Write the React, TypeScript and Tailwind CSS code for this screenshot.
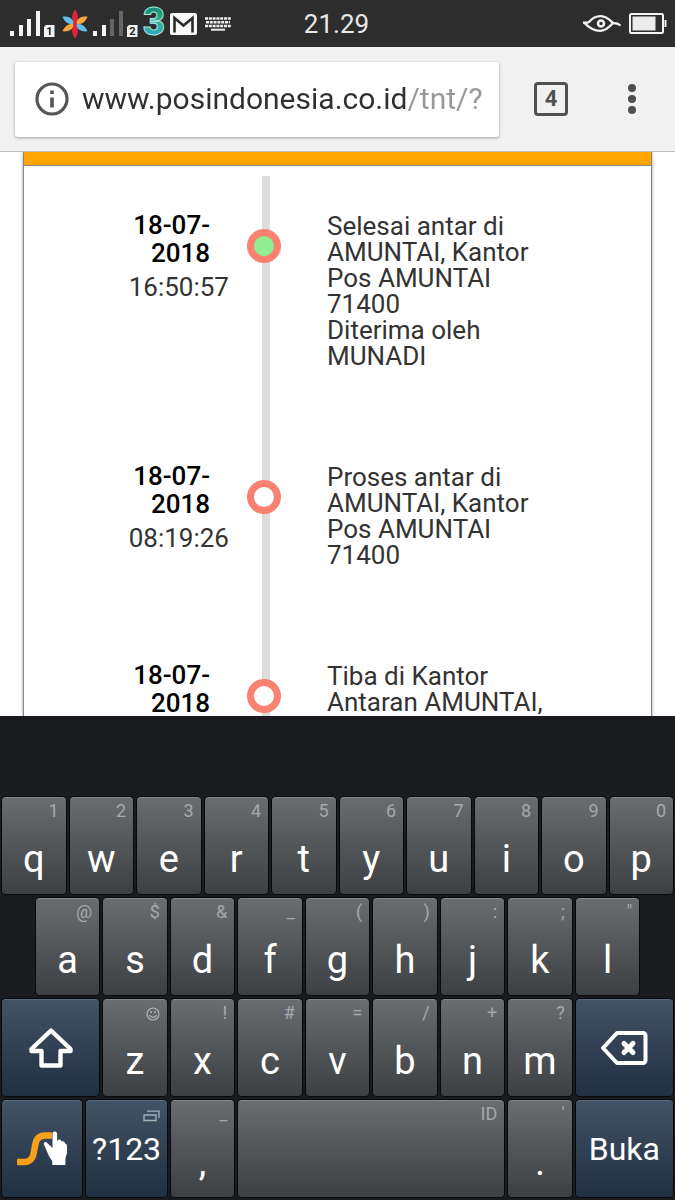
import { useState, type ReactNode } from "react";
import { clsx } from "clsx";

interface TrackingEvent {
  date: string;
  time?: string;
  lines: string[];
  delivered?: boolean;
}

const EVENTS: TrackingEvent[] = [
  {
    date: "18-07-2018",
    time: "16:50:57",
    lines: ["Selesai antar di AMUNTAI, Kantor Pos AMUNTAI 71400", "Diterima oleh MUNADI"],
    delivered: true,
  },
  {
    date: "18-07-2018",
    time: "08:19:26",
    lines: ["Proses antar di AMUNTAI, Kantor Pos AMUNTAI 71400"],
  },
  { date: "18-07-2018", lines: ["Tiba di Kantor Antaran AMUNTAI,"] },
];

// [letter, long-press symbol]
const ROW_1 = [["q", "1"], ["w", "2"], ["e", "3"], ["r", "4"], ["t", "5"], ["y", "6"], ["u", "7"], ["i", "8"], ["o", "9"], ["p", "0"]];
const ROW_2 = [["a", "@"], ["s", "$"], ["d", "&"], ["f", "_"], ["g", "("], ["h", ")"], ["j", ":"], ["k", ";"], ["l", '"']];
const ROW_3 = [["z", ""], ["x", "!"], ["c", "#"], ["v", "="], ["b", "/"], ["n", "+"], ["m", "?"]];

function SignalIcon({ sim, strength }: { sim: string; strength: number }) {
  const bars = [
    { x: 0, h: 5 },
    { x: 9, h: 11 },
    { x: 17, h: 17 },
    { x: 26, h: 25 },
  ];
  return (
    <svg width="45" height="30" viewBox="0 -2 45 30" role="img" aria-label={`SIM ${sim}`}>
      {bars.map((b, i) => (
        <rect key={b.x} x={b.x} y={25 - b.h} width="4" height={b.h} fill={i < strength ? "#f4f4f4" : "#666"} />
      ))}
      <path d="M36 14h8.500v12H34v-10z" fill="#f4f4f4" />
      <text x="39.300" y="24" fontSize="11" fontWeight="700" textAnchor="middle" fill="#222">
        {sim}
      </text>
    </svg>
  );
}

function FlowerIcon() {
  const petal = "M0 0C-4-4-3.600-10 0-14.500C3.600-10 4-4 0 0z";
  return (
    <svg width="28" height="30" viewBox="-14 -15 28 30" aria-hidden="true">
      <path d={petal} fill="#62bdea" transform="rotate(-60)" />
      <path d={petal} fill="#f6a93b" transform="rotate(60)" />
      <path d={petal} fill="#62bdea" transform="rotate(120)" />
      <path d={petal} fill="#f6a93b" transform="rotate(-120)" />
      <path d={petal} fill="#e0243c" />
      <path d={petal} fill="#e0243c" transform="rotate(180)" />
      <circle r="2" fill="#e0243c" />
    </svg>
  );
}

function ThreeIcon() {
  return (
    <svg width="24" height="44" viewBox="0 -6 24 44" aria-hidden="true">
      <defs>
        <linearGradient id="three" x1="0" y1="0" x2="0" y2="1">
          <stop offset="0.2" stopColor="#178f7c" />
          <stop offset="0.5" stopColor="#35b08f" />
          <stop offset="0.9" stopColor="#2f9fdc" />
        </linearGradient>
      </defs>
      <text
        x="12"
        y="27"
        fontSize="38"
        fontWeight="900"
        textAnchor="middle"
        fill="url(#three)"
        stroke="#a5e3dc"
        strokeWidth="1"
      >
        3
      </text>
    </svg>
  );
}

function MailIcon() {
  return (
    <svg width="27" height="22" viewBox="0 0 27 22" aria-hidden="true">
      <rect width="27" height="22" rx="2" fill="#f7f7f7" />
      <path d="M4.500 19.500V5l9 7.500 9-7.500v14.500" fill="none" stroke="#2b2b2b" strokeWidth="2.600" />
    </svg>
  );
}

function KeyboardStatusIcon() {
  return (
    <svg width="26" height="14" viewBox="0 0 26 14" aria-hidden="true">
      <g stroke="#eee" strokeWidth="2.600">
        <path d="M0 1.500h26" strokeDasharray="3 0.800" />
        <path d="M1 5.300h24" strokeDasharray="3 0.800" />
        <path d="M0 9h26" strokeDasharray="3 0.800" />
        <path d="M6 12.700h14" strokeWidth="2" />
      </g>
    </svg>
  );
}

function EyeIcon() {
  return (
    <svg width="38" height="18" viewBox="0 0 38 18" fill="none" stroke="#f4f4f4" aria-hidden="true">
      <path d="M0 7.500C3 8 4 8 6 7C10 2.500 14 1 18 1.200C24 1.500 27 5.500 30 8C33 8 35.500 8.500 37.500 10.500" strokeWidth="2.300" />
      <path d="M1 7.500C6 13 11 15.800 17.500 15.800C23.500 15.500 27 11.500 30 8" strokeWidth="2.300" />
      <circle cx="18" cy="8.500" r="3" strokeWidth="2.500" />
    </svg>
  );
}

function BatteryIcon() {
  return (
    <svg width="38" height="22" viewBox="0 0 38 22" aria-hidden="true">
      <rect x="1" y="1" width="33" height="19" rx="1.500" fill="none" stroke="#f4f4f4" strokeWidth="2" />
      <rect x="3.500" y="3.500" width="23" height="14" fill="#ececec" />
      <rect x="35.500" y="7" width="2" height="7" fill="#f4f4f4" />
    </svg>
  );
}

function StatusBar() {
  return (
    <header className="grid h-[47px] shrink-0 grid-cols-[1fr_auto_1fr] items-center bg-[#2d2d2d] pr-2 pl-[10px]">
      <div className="flex items-center">
        <SignalIcon sim="1" strength={4} />
        <span className="ml-1.5"><FlowerIcon /></span>
        <span className="ml-1"><SignalIcon sim="2" strength={2} /></span>
        <span className="ml-1"><ThreeIcon /></span>
        <span className="ml-1"><MailIcon /></span>
        <span className="ml-2"><KeyboardStatusIcon /></span>
      </div>
      <time className="pr-1 text-[26px] leading-8 text-[#e8e8e8]">21.29</time>
      <div className="flex items-center justify-end gap-2">
        <EyeIcon />
        <BatteryIcon />
      </div>
    </header>
  );
}

function BrowserBar() {
  const [url, setUrl] = useState("www.posindonesia.co.id/tnt/?");
  return (
    <div className="relative z-10 flex h-[105px] shrink-0 items-center border-b border-[#bdbdbd] bg-[#f1f1f1] pl-[15px]">
      <div className="flex h-[75px] min-w-0 flex-1 items-center rounded-[3px] bg-white pl-5 shadow-[0_1px_3px_rgba(0,0,0,0.35)]">
        <button type="button" aria-label="Info situs" className="shrink-0">
          <svg width="34" height="34" viewBox="0 0 34 34" aria-hidden="true">
            <circle cx="17" cy="17" r="15" fill="none" stroke="#555" strokeWidth="3.200" />
            <path d="M15.200 8.500h3.600v3.600h-3.600zM15.200 15.500h3.600v10h-3.600z" fill="#555" />
          </svg>
        </button>
        {/* host is dark, path is grey */}
        <input
          type="text"
          aria-label="Alamat web"
          value={url}
          onChange={(e) => setUrl(e.target.value)}
          className="ml-[13px] min-w-0 flex-1 bg-[linear-gradient(to_right,#303030_325px,#989898_325px)] bg-clip-text text-[30px] leading-10 text-transparent outline-none"
        />
      </div>
      <button
        type="button"
        aria-label="Tab terbuka"
        className="ml-[35px] flex size-[34px] items-center justify-center rounded-[4px] border-[3px] border-[#505050] text-[22px] leading-none font-bold text-[#505050]"
      >
        4
      </button>
      <button type="button" aria-label="Menu" className="ml-[21px] flex h-12 w-[86px] items-center justify-center">
        <svg width="8" height="32" viewBox="0 0 8 32" fill="#505050" aria-hidden="true">
          <circle cx="4" cy="5" r="4" />
          <circle cx="4" cy="16" r="4" />
          <circle cx="4" cy="27" r="4" />
        </svg>
      </button>
    </div>
  );
}

function TimelineItem({ event }: { event: TrackingEvent }) {
  return (
    <li className="grid grid-cols-[238fr_65fr_229fr_95fr] text-[26px]">
      <div className="pt-[35px] text-right">
        <p className="ml-auto w-[131px] pr-[52px] leading-7 font-medium text-black">{event.date}</p>
        {event.time ? <p className="mt-1.5 pr-[33px] leading-7 text-[#333]">{event.time}</p> : null}
      </div>
      <div className="relative">
        <div className="h-full w-2 bg-[#dcdcdc]" />
        <span
          className={clsx(
            "absolute top-[53px] -left-[15px] size-[34px] rounded-full border-[7px] border-[#fa8072]",
            event.delivered ? "bg-[#90ee90]" : "bg-white",
          )}
        />
      </div>
      <div className="pt-[37px] pb-[58px] leading-[26px] text-[#333]">
        {event.lines.map((line) => (
          <p key={line}>{line}</p>
        ))}
      </div>
    </li>
  );
}

function TrackingPage() {
  return (
    <main className="min-h-0 flex-1 overflow-hidden bg-white px-[23px]">
      <div className="border-x border-[#888] shadow-[0_0_3px_rgba(0,0,0,0.4)]">
        <div className="h-3.5 border-b border-[#888] bg-[#ffa500]" />
        <ol className="pt-2.5">
          {EVENTS.map((event, i) => (
            <TimelineItem key={i} event={event} />
          ))}
        </ol>
      </div>
    </main>
  );
}

interface KeyProps {
  span: string;
  label: string;
  hint?: ReactNode;
  dark?: boolean;
  align?: "bottom" | "center";
  children?: ReactNode;
}

function Key({ span, label, hint, dark, align = "bottom", children }: KeyProps) {
  return (
    <button
      type="button"
      aria-label={label}
      className={clsx(
        "relative m-[2px] flex h-[97px] justify-center rounded-[4px] border-t bg-linear-to-b text-white shadow-[0_0_0_1px_#08090b]",
        span,
        dark ? "border-[#5a6a7c] from-[#435366] to-[#202f42]" : "border-[#85888b] from-[#6a6d70] to-[#3d4042]",
        align === "center" ? "items-center text-[32px] leading-10" : "items-end pb-3 text-[38px] leading-[46px]",
      )}
    >
      {hint ? <span className="absolute top-px right-[7px] text-[18px] leading-6 text-[#a6a8aa]">{hint}</span> : null}
      {children}
    </button>
  );
}

function SmileyHint() {
  return (
    <svg className="mt-1.5" width="14" height="14" viewBox="0 0 14 14" fill="none" stroke="#b0b2b4" aria-hidden="true">
      <circle cx="7" cy="7" r="6" strokeWidth="1.200" />
      <path d="M3.500 8c1 3.200 6 3.200 7 0" strokeWidth="1.200" />
      <path d="M5 4v2M9 4v2" strokeWidth="1.400" />
    </svg>
  );
}

function WindowsHint() {
  return (
    <svg className="mt-2" width="17" height="12" viewBox="0 0 17 12" fill="none" stroke="#a9b1ba" aria-hidden="true">
      <path d="M1 5h12v5.500H1z" strokeWidth="1.300" />
      <path d="M4 1.200h12V8" strokeWidth="1.300" />
    </svg>
  );
}

function Keyboard() {
  return (
    <section aria-label="Keyboard" className="shrink-0 bg-[#1a1b1f] pt-[79px] pb-px">
      <div className="grid grid-cols-[repeat(40,minmax(0,1fr))]">
        {ROW_1.map(([k, h]) => (
          <Key key={k} span="col-span-4" label={k} hint={h}>{k}</Key>
        ))}
      </div>
      <div className="grid grid-cols-[repeat(40,minmax(0,1fr))]">
        {ROW_2.map(([k, h], i) => (
          <Key key={k} span={i === 0 ? "col-span-4 col-start-3" : "col-span-4"} label={k} hint={h}>{k}</Key>
        ))}
      </div>
      <div className="grid grid-cols-[repeat(40,minmax(0,1fr))]">
        <Key span="col-span-6" label="Shift" dark align="center">
          <svg width="44" height="40" viewBox="0 0 44 40" fill="none" stroke="#fff" strokeWidth="4.400" strokeLinejoin="round" aria-hidden="true">
            <path d="M22 2.500L2.500 21v2h10v14.500h19V23h10v-2z" />
          </svg>
        </Key>
        {ROW_3.map(([k, h]) => (
          <Key key={k} span="col-span-4" label={k} hint={h || <SmileyHint />}>{k}</Key>
        ))}
        <Key span="col-span-6" label="Hapus" dark align="center">
          <svg width="48" height="36" viewBox="0 0 48 36" fill="none" stroke="#fff" strokeWidth="4" strokeLinejoin="round" aria-hidden="true">
            <path d="M17 3h26a2.500 2.500 0 0 1 2.500 2.500v25A2.500 2.500 0 0 1 43 33H17L3 18z" />
            <path d="M24 13.500l9 9M33 13.500l-9 9" strokeWidth="5" strokeLinecap="round" />
          </svg>
        </Key>
      </div>
      <div className="grid grid-cols-[repeat(40,minmax(0,1fr))]">
        <Key span="col-span-5" label="Swype" dark align="center">
          <svg width="50" height="36" viewBox="0 0 50 36" aria-hidden="true">
            <path d="M0 31h7C24 31 11 4.500 28 4.500h7" fill="none" stroke="#f9a01b" strokeWidth="6.500" />
            <path
              d="M35.500 3c0-3.300 4.600-3.300 4.600 0v7c2-2.500 4-1.500 4.400.6 2-1 3.500 0 3.500 2 1.500.2 2 1.200 2 3v6c0 2.500-1.600 4-1.600 7V34H35.300v-3.500c-1-2.500-3-4-4-7L27 13.500c-.8-2.200 1.600-3.400 3.300-1.600L35.500 17z"
              fill="#fff"
            />
          </svg>
        </Key>
        <Key span="col-span-5" label="Angka dan simbol" dark align="center" hint={<WindowsHint />}>?123</Key>
        <Key span="col-span-4" label="Koma" hint="_">,</Key>
        <Key span="col-span-16" label="Spasi" hint="ID" />
        <Key span="col-span-4" label="Titik" hint="'">.</Key>
        <Key span="col-span-6" label="Buka" dark align="center">Buka</Key>
      </div>
    </section>
  );
}

export default function App() {
  return (
    <div className="flex h-screen flex-col overflow-hidden font-[Roboto,sans-serif]">
      <StatusBar />
      <BrowserBar />
      <TrackingPage />
      <Keyboard />
    </div>
  );
}
